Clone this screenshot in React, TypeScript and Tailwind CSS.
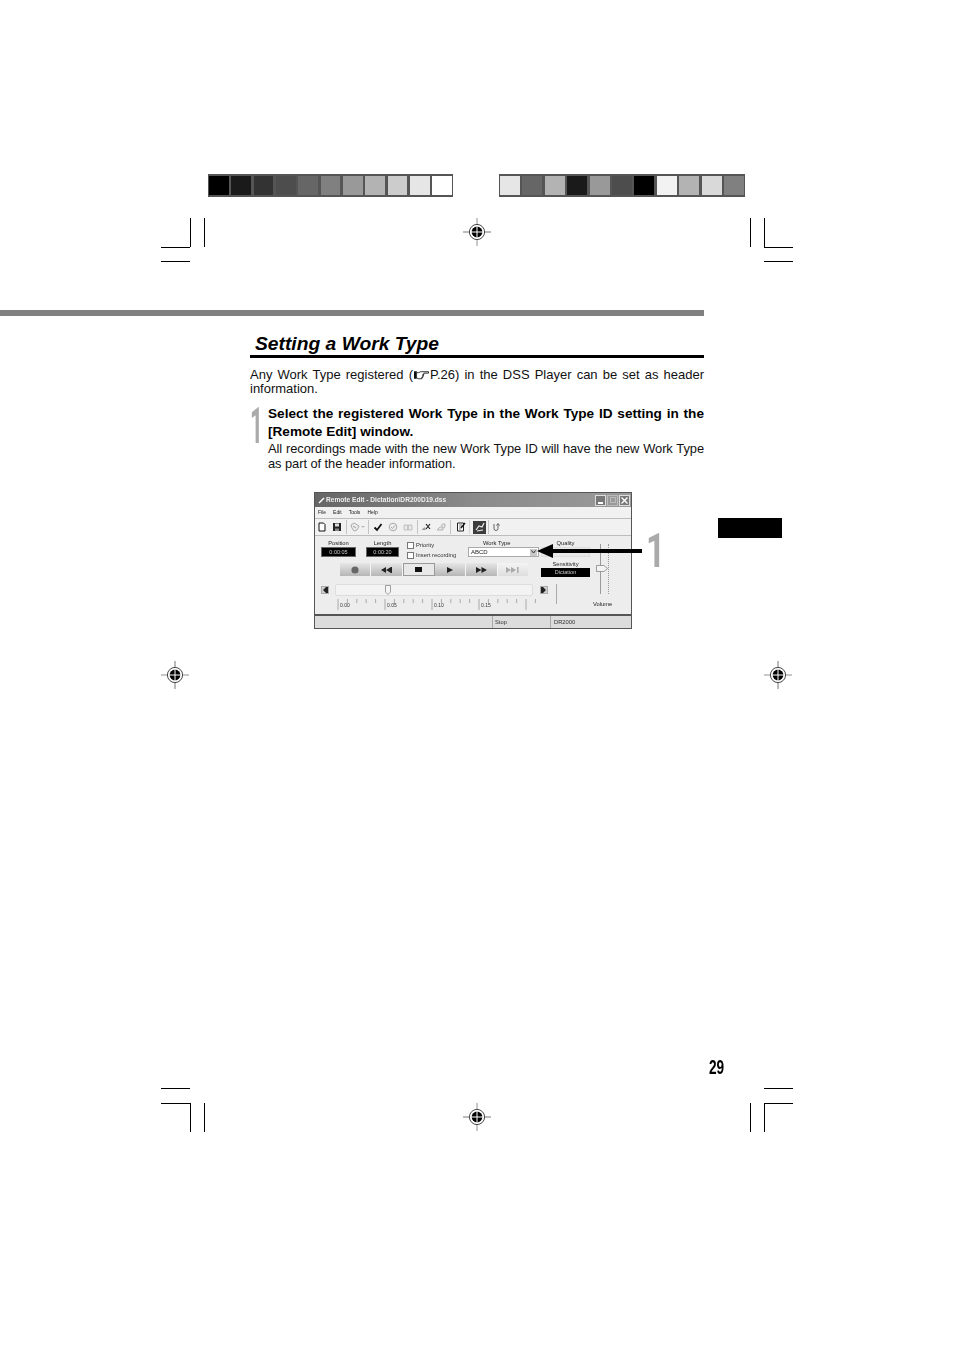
const grayscale = ['bg-[#000]', 'bg-[#1a1a1a]', 'bg-[#333]', 'bg-[#4d4d4d]', 'bg-[#666]', 'bg-[#808080]', 'bg-[#999]', 'bg-[#b3b3b3]', 'bg-[#ccc]', 'bg-[#e6e6e6]', 'bg-[#fff]']
const shuffled = ['bg-[#e6e6e6]', 'bg-[#666]', 'bg-[#b3b3b3]', 'bg-[#1a1a1a]', 'bg-[#999]', 'bg-[#4d4d4d]', 'bg-[#000]', 'bg-[#f2f2f2]', 'bg-[#b3b3b3]', 'bg-[#d9d9d9]', 'bg-[#808080]']

function ColorStrip({ colors, className }: { colors: string[]; className: string }) {
  return (
    <div className={`flex h-[23px] gap-[2.5px] bg-[#555] px-[1px] py-[2px] ${className}`}>
      {colors.map((c, i) => (
        <div key={i} className={`flex-1 ${c}`} />
      ))}
    </div>
  )
}

// Printer's marks sit at fixed places on the sheet
function Rule({ className }: { className: string }) {
  return <div className={`absolute bg-black ${className}`} />
}

function RegMark({ className, turned }: { className: string; turned?: boolean }) {
  return (
    <svg viewBox="0 0 28 28" className={`absolute h-[28px] w-[28px] ${className}`}>
      <g transform={turned ? 'rotate(90 14 14)' : undefined}>
        <path d="M14 0V28" stroke="#c8c8c8" strokeWidth="2" />
        <path d="M0 14H28" stroke="#777" strokeWidth="1" />
      </g>
      <circle cx="14" cy="14" r="7.6" fill="#fff" stroke="#333" strokeWidth="0.9" />
      <circle cx="14" cy="14" r="5.4" fill="#000" />
      <path d="M14 8V20M8 14H20" stroke="#fff" strokeWidth="1" />
    </svg>
  )
}

function PointingHand() {
  return (
    <svg viewBox="0 0 16 10" className="mx-[1px] inline-block h-[10px] w-[15px] align-[-1px]">
      <path d="M0 1H3V9H0Z" fill="#111" />
      <path
        d="M3 2.5H5L7 1.5H15.5V3H10.5M10.5 3V4.5H9M10 4.5V6H8.5M9.5 6V7.5H8M8.5 7.5V9H4.5L3 8"
        fill="none"
        stroke="#111"
        strokeWidth="0.9"
      />
    </svg>
  )
}

function ToolIcon({ children }: { children: React.ReactNode }) {
  return (
    <svg viewBox="0 0 10 10" className="h-[10px] w-[10px] shrink-0">
      {children}
    </svg>
  )
}

function ToolSep({ className }: { className: string }) {
  return <div className={`h-[14px] w-px shrink-0 bg-[#c4c4c4] ${className}`} />
}

function Toolbar() {
  return (
    <div className="flex h-[18px] items-center border-y border-[#bdbdbd] bg-[#f1f1f1] pl-[2px]">
      <ToolIcon>
        <path d="M2 1H6.5L8 2.5V9H2Z" fill="#fff" stroke="#111" strokeWidth="1" />
      </ToolIcon>
      <div className="ml-[5px]">
        <ToolIcon>
          <path d="M1 1H9V9H1Z" fill="#222" />
          <path d="M3 1.5H7V4.5H3Z" fill="#ddd" />
          <path d="M3 6.5H7V9H3Z" fill="#888" />
        </ToolIcon>
      </div>
      <ToolSep className="ml-[4px]" />
      <div className="ml-[3px]">
        <ToolIcon>
          <path d="M1 3L4 1L9 4L7 8L4 9L2 6Z" fill="#eee" stroke="#aaa" strokeWidth="1" />
          <path d="M3 4L6 6" stroke="#999" strokeWidth="1" />
        </ToolIcon>
      </div>
      <svg viewBox="0 0 4 4" className="ml-[1px] h-[4px] w-[4px]">
        <path d="M0 1H4L2 3Z" fill="#bbb" />
      </svg>
      <ToolSep className="ml-[3px]" />
      <div className="ml-[4px]">
        <ToolIcon>
          <path d="M1.5 5.5L4 8L8.5 2" fill="none" stroke="#111" strokeWidth="1.8" />
        </ToolIcon>
      </div>
      <div className="ml-[5px]">
        <ToolIcon>
          <circle cx="5" cy="5" r="3.8" fill="#eee" stroke="#aaa" />
          <path d="M3 5L4.5 6.5L7 3.5" fill="none" stroke="#aaa" />
        </ToolIcon>
      </div>
      <div className="ml-[5px]">
        <ToolIcon>
          <path d="M1 3H4.7V8H1ZM5.3 3H9V8H5.3Z" fill="#e8e8e8" stroke="#b5b5b5" strokeWidth="0.8" />
        </ToolIcon>
      </div>
      <ToolSep className="ml-[4px]" />
      <div className="ml-[3px]">
        <ToolIcon>
          <path d="M5 2L9 7M9 2L5 7" stroke="#222" strokeWidth="1.2" />
          <path d="M0.5 8L3.5 5L5 8Z" fill="#999" />
        </ToolIcon>
      </div>
      <div className="ml-[5px]">
        <ToolIcon>
          <path d="M1 8L4 5H7V8ZM5 4L6.5 2H9V5L7.5 6" fill="#e4e4e4" stroke="#aaa" strokeWidth="0.8" />
        </ToolIcon>
      </div>
      <ToolSep className="ml-[4px]" />
      <div className="ml-[5px]">
        <ToolIcon>
          <path d="M1.5 1H7.5V9H1.5Z" fill="#fff" stroke="#222" strokeWidth="1" />
          <path d="M3 3H6M3 5H6M3 7H5" stroke="#444" strokeWidth="0.7" />
          <path d="M5 6L9 1" stroke="#111" strokeWidth="1.4" />
        </ToolIcon>
      </div>
      <ToolSep className="ml-[3px] opacity-60" />
      <div className="ml-[3px] flex h-[13px] w-[13px] items-center justify-center bg-[#3c3c3c]">
        <ToolIcon>
          <path d="M1 8L4 4L7 5L9 1M2 9L8 8" fill="none" stroke="#eee" strokeWidth="1.2" />
        </ToolIcon>
      </div>
      <ToolSep className="ml-[2px]" />
      <div className="ml-[2px]">
        <ToolIcon>
          <path d="M3 2V6.5A2 2 0 0 0 7 6.5V2M5.5 3.5L7 1.5L8.5 3.5" fill="none" stroke="#555" strokeWidth="0.9" />
        </ToolIcon>
      </div>
    </div>
  )
}

function Readout({ label, value, className }: { label: string; value: string; className: string }) {
  return (
    <div className={`flex flex-col items-center ${className}`}>
      <span className="text-[5.8px] leading-[7px] text-[#222]">{label}</span>
      <div className="flex h-[10px] w-full items-center justify-center border border-[#666] bg-black text-[5.5px] text-[#ccc]">
        {value}
      </div>
    </div>
  )
}

function CheckRow({ label }: { label: string }) {
  return (
    <div className="flex h-[10px] items-center gap-[2px] text-[5.8px] text-[#333]">
      <div className="h-[7px] w-[7px] shrink-0 border border-[#777] bg-white" />
      <span className="whitespace-nowrap">{label}</span>
    </div>
  )
}

function TransportButton({ children, pressed }: { children: React.ReactNode; pressed?: boolean }) {
  return (
    <div
      className={`flex h-[13px] flex-1 items-center justify-center ${
        pressed ? 'border border-[#999] bg-[#e8e8e8]' : 'border-r border-[#f5f5f5] bg-gradient-to-b from-[#e6e6e6] to-[#b6b6b6]'
      }`}
    >
      {children}
    </div>
  )
}

function Transport() {
  return (
    <div className="ml-[19px] flex w-[188px]">
      <TransportButton>
        <svg viewBox="0 0 8 8" className="h-[8px] w-[8px]">
          <circle cx="4" cy="4" r="3.6" fill="#666" />
        </svg>
      </TransportButton>
      <TransportButton>
        <svg viewBox="0 0 11 6" className="h-[6px] w-[11px]">
          <path d="M5 0V6L0 3ZM10 0V6L5 3ZM10 0H11V6H10Z" fill="#222" />
        </svg>
      </TransportButton>
      <TransportButton pressed>
        <svg viewBox="0 0 7 5" className="h-[5px] w-[7px]">
          <path d="M0 0H7V5H0Z" fill="#111" />
        </svg>
      </TransportButton>
      <TransportButton>
        <svg viewBox="0 0 6 6" className="h-[6px] w-[6px]">
          <path d="M0 0L6 3L0 6Z" fill="#222" />
        </svg>
      </TransportButton>
      <TransportButton>
        <svg viewBox="0 0 11 6" className="h-[6px] w-[11px]">
          <path d="M0 0L5.5 3L0 6ZM5.5 0L11 3L5.5 6Z" fill="#222" />
        </svg>
      </TransportButton>
      <div className="flex h-[13px] flex-1 items-center justify-center bg-gradient-to-b from-[#f4f4f4] to-[#dedede]">
        <svg viewBox="0 0 13 6" className="h-[6px] w-[13px]">
          <path d="M0 0L5 3L0 6ZM5 0L10 3L5 6ZM11 0H12.5V6H11Z" fill="#aaa" />
        </svg>
      </div>
    </div>
  )
}

function SeekButton({ right }: { right?: boolean }) {
  return (
    <div className="flex h-[8px] w-[8px] shrink-0 items-center justify-center border border-[#aaa] bg-[#cfcfcf]">
      <svg viewBox="0 0 6 6" className="h-[6px] w-[6px]">
        <path d={right ? 'M0 0H2V6H0ZM2 0L5 3L2 6Z' : 'M6 0V6H4V0ZM4 0L1 3L4 6Z'} fill="#222" />
      </svg>
    </div>
  )
}

function Ruler() {
  const ticks = Array.from({ length: 22 }, (_, i) => 17 + i * 9.4)
  return (
    <div className="relative mt-[3px] flex h-[12px] items-center pl-[17px] text-[5px] text-[#333]">
      <svg viewBox="0 0 225 12" className="absolute left-0 top-0 h-[12px] w-[225px]">
        {ticks.map((x, i) => (
          <path key={i} d={`M${x} 0V${i % 5 === 0 ? 11 : 4}`} stroke="#999" strokeWidth="0.8" />
        ))}
      </svg>
      {['0.00', '0.05', '0.10', '0.15'].map((t) => (
        <span key={t} className="w-[47px] pl-[2px] pt-[1px]">
          {t}
        </span>
      ))}
    </div>
  )
}

function RemoteEditWindow() {
  return (
    <div className="flex h-[137px] w-[318px] flex-col border border-[#555] bg-[#ededed] blur-[0.5px]">
      {/* title bar */}
      <div className="flex h-[14px] shrink-0 items-center bg-gradient-to-r from-[#666] via-[#8a8a8a] to-[#9a9a9a] pl-[3px] pr-[1px]">
        <svg viewBox="0 0 7 7" className="h-[7px] w-[7px]">
          <path d="M1 6L6 1" stroke="#fff" strokeWidth="1.4" />
        </svg>
        <span className="ml-[1px] whitespace-nowrap text-[6.6px] font-bold text-[#eee]">
          Remote Edit - Dictation\DR200D19.dss
        </span>
        <div className="ml-auto flex gap-[1px]">
          <div className="flex h-[11px] w-[11px] items-end justify-center border border-[#ddd] bg-[#777] pb-[1px]">
            <div className="h-[2px] w-[5px] bg-white" />
          </div>
          <div className="flex h-[11px] w-[11px] items-center justify-center border border-[#bbb] bg-[#9a9a9a]">
            <div className="h-[6px] w-[6px] border border-[#bbb]" />
          </div>
          <div className="flex h-[11px] w-[11px] items-center justify-center border border-[#ddd] bg-[#777]">
            <svg viewBox="0 0 7 7" className="h-[7px] w-[7px]">
              <path d="M0.5 0.5L6.5 6.5M6.5 0.5L0.5 6.5" stroke="#fff" strokeWidth="1.4" />
            </svg>
          </div>
        </div>
      </div>
      {/* menu */}
      <div className="flex h-[11px] shrink-0 items-center gap-[7px] bg-[#f1f1f1] pl-[3px] text-[5px] text-[#222]">
        <span>File</span>
        <span>Edit</span>
        <span>Tools</span>
        <span>Help</span>
      </div>
      <Toolbar />
      {/* main area */}
      <div className="flex flex-1">
        <div className="w-[278px] shrink-0 pl-[6px] pt-[4px]">
          <div className="flex items-start">
            <Readout label="Position" value="0:00:05" className="w-[35px]" />
            <Readout label="Length" value="0:00:20" className="ml-[10px] w-[33px]" />
            <div className="ml-[8px] w-[60px]">
              <CheckRow label="Priority" />
              <CheckRow label="Insert recording" />
            </div>
            <div className="ml-[1px] flex w-[71px] flex-col items-start">
              <span className="pl-[15px] text-[5.8px] leading-[7px] text-[#222]">Work Type</span>
              <div className="flex h-[10px] w-full items-center justify-between border border-[#aaa] bg-white pl-[2px] pr-[1px] text-[6px] text-[#222]">
                ABCD
                <div className="flex h-[7px] w-[7px] items-center justify-center bg-[#c8c8c8]">
                  <svg viewBox="0 0 5 4" className="h-[4px] w-[5px]">
                    <path d="M0.5 0.5L2.5 3L4.5 0.5" fill="none" stroke="#333" strokeWidth="1" />
                  </svg>
                </div>
              </div>
            </div>
            <div className="ml-[2px] flex w-[49px] flex-col items-center">
              <span className="text-[5.8px] leading-[7px] text-[#222]">Quality</span>
              <div className="flex h-[10px] w-full items-center border border-[#ddd] bg-[#e8e8e8] pl-[2px] text-[5px] text-[#bbb]">
                (HQ)
              </div>
            </div>
          </div>
          <div className="mt-[3px] flex h-[13px] items-start">
            <Transport />
            <div className="ml-[13px] mt-[-2px] flex w-[49px] flex-col items-center">
              <span className="text-[5.8px] leading-[6px] text-[#222]">Sensitivity</span>
              <div className="mt-[1px] flex h-[9px] w-full items-center justify-center bg-black text-[5.5px] text-[#ccc]">
                Dictation
              </div>
            </div>
          </div>
          <div className="mt-[8px] flex">
            <div className="w-[234px] shrink-0">
              <div className="flex items-center">
                <SeekButton />
                <div className="relative ml-[6px] h-[12px] w-[198px] rounded-[2px] border border-[#ddd] bg-[#f3f3f3]">
                  <svg viewBox="0 0 6 10" className="absolute left-[49px] top-0 h-[10px] w-[6px]">
                    <path d="M0.5 0.5H5.5V7L3 9.5L0.5 7Z" fill="#f5f5f5" stroke="#888" strokeWidth="0.8" />
                  </svg>
                </div>
                <div className="ml-[7px]">
                  <SeekButton right />
                </div>
              </div>
              <Ruler />
            </div>
            <div className="ml-[1px] flex h-[20px] w-[5px] justify-center border-l border-[#aaa]" />
          </div>
        </div>
        {/* volume */}
        <div className="flex flex-1 flex-col items-start pl-[3px] pt-[8px]">
          <div className="relative flex h-[50px] w-[16px] justify-start gap-[7px]">
            <div className="ml-[4px] h-full w-px bg-[#999]" />
            <div className="h-full w-0 border-l border-dotted border-[#999]" />
            <svg viewBox="0 0 12 7" className="absolute left-0 top-[21px] h-[7px] w-[12px]">
              <path d="M0.5 0.5H8L11.5 3.5L8 6.5H0.5Z" fill="#f3f3f3" stroke="#888" strokeWidth="0.8" />
            </svg>
          </div>
          <span className="ml-[-3px] mt-[7px] text-[5.8px] leading-[7px] text-[#222]">Volume</span>
        </div>
      </div>
      {/* status bar */}
      <div className="flex h-[14px] shrink-0 items-center border-t-2 border-[#555] bg-[#dcdcdc] text-[5.8px] text-[#333]">
        <div className="w-[177px]" />
        <div className="flex h-full w-[58px] items-center border-l border-[#aaa] pl-[2px]">Stop</div>
        <div className="flex h-full items-center border-l border-[#aaa] pl-[3px]">DR2000</div>
      </div>
    </div>
  )
}

export default function App() {
  return (
    <div className="relative h-[1351px] w-[954px] overflow-hidden bg-white pt-[174px] font-['Liberation_Sans',Arial,sans-serif] text-[#111]">
      <Rule className="left-[161px] top-[247px] h-px w-[29px]" />
      <Rule className="left-[161px] top-[261px] h-px w-[29px]" />
      <Rule className="left-[190px] top-[218px] h-[29px] w-px" />
      <Rule className="left-[204px] top-[218px] h-[29px] w-px" />
      <Rule className="left-[750px] top-[218px] h-[29px] w-px" />
      <Rule className="left-[764px] top-[218px] h-[29px] w-px" />
      <Rule className="left-[764px] top-[247px] h-px w-[29px]" />
      <Rule className="left-[764px] top-[261px] h-px w-[29px]" />
      <Rule className="left-[161px] top-[1088px] h-px w-[29px]" />
      <Rule className="left-[161px] top-[1103px] h-px w-[29px]" />
      <Rule className="left-[190px] top-[1103px] h-[29px] w-px" />
      <Rule className="left-[204px] top-[1103px] h-[29px] w-px" />
      <Rule className="left-[750px] top-[1103px] h-[29px] w-px" />
      <Rule className="left-[764px] top-[1103px] h-[29px] w-px" />
      <Rule className="left-[764px] top-[1088px] h-px w-[29px]" />
      <Rule className="left-[764px] top-[1103px] h-px w-[29px]" />
      <RegMark className="left-[463px] top-[218px]" />
      <RegMark className="left-[463px] top-[1103px]" />
      <RegMark className="left-[161px] top-[661px]" turned />
      <RegMark className="left-[764px] top-[661px]" turned />

      <div className="flex pl-[208px]">
        <ColorStrip colors={grayscale} className="w-[245px]" />
        <ColorStrip colors={shuffled} className="ml-[46px] w-[246px]" />
      </div>

      <div className="mt-[113px] h-[6px] w-[704px] bg-[#808080]" />

      <div className="flex pl-[250px]">
        <main className="w-[454px] shrink-0">
          <h2 className="box-content flex h-[39px] items-end border-b-[3px] border-black pl-[5px] text-[19.25px] font-bold italic leading-[22px] text-black">
            Setting a Work Type
          </h2>
          <p className="mt-[10px] text-justify text-[13px] leading-[14px]">
            Any Work Type registered (
            <PointingHand />
            P.26) in the DSS Player can be set as header information.
          </p>
          <div className="mt-[9px] flex">
            <div className="h-[36px] w-[18px] shrink-0">
              <span className="block origin-top-left scale-x-[0.45] font-['Roboto',sans-serif] text-[50px] font-bold leading-[42px] text-[#aaa]">
                1
              </span>
            </div>
            <div className="min-w-0 flex-1">
              <p className="text-justify text-[13.6px] font-bold leading-[18px] text-black">
                Select the registered Work Type in the Work Type ID setting in the [Remote Edit] window.
              </p>
              <p className="text-justify text-[12.9px] leading-[15px] tracking-[-0.07px]">
                All recordings made with the new Work Type ID will have the new Work Type as part of the header information.
              </p>
            </div>
          </div>
          <figure className="relative ml-[64px] mt-[21px]">
            <RemoteEditWindow />
            <svg viewBox="0 0 105 14" className="absolute left-[223px] top-[52px] h-[14px] w-[105px]">
              <path d="M0 7L16 0V5H105V9H16V14Z" fill="#000" />
            </svg>
            <span className="absolute left-[332px] top-[40px] origin-top-left scale-x-[0.7] font-['Roboto',sans-serif] text-[48px] font-bold leading-[38px] text-[#aaa]">
              1
            </span>
          </figure>
        </main>
        <aside className="ml-[14px] w-[64px] pt-[202px]">
          <div className="h-[20px] w-[64px] bg-black" />
          <div className="ml-[-9px] mt-[517px] w-[15px] origin-top-left scale-x-[0.65] whitespace-nowrap text-[21px] font-bold leading-[24px] text-black">
            29
          </div>
        </aside>
      </div>
    </div>
  )
}
